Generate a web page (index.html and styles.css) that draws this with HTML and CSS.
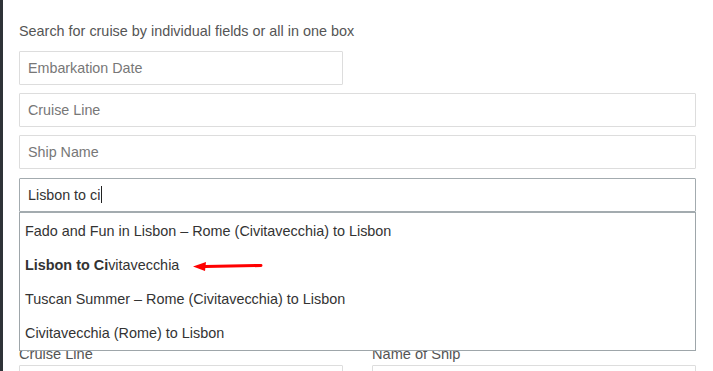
FILE: index.html
```html
<!DOCTYPE html>
<html lang="en">

<head>
    <meta charset="UTF-8">
    <meta name="viewport" content="width=device-width, initial-scale=1.0">
    <title>Cruise Search</title>
    <link rel="stylesheet" href="styles.css">
</head>

<body>
    <div class="panel">
        <p class="intro">Search for cruise by individual fields or all in one box</p>

        <input type="text" class="field half" placeholder="Embarkation Date">
        <input type="text" class="field" placeholder="Cruise Line">
        <input type="text" class="field" placeholder="Ship Name">

        <div class="search-wrap">
            <div class="field focused">Lisbon to ci<span class="caret"></span></div>
            <ul class="suggestions">
                <li>Fado and Fun in Lisbon &ndash; Rome (Civitavecchia) to Lisbon</li>
                <li><b>Lisbon to Ci</b>vitavecchia
                    <svg class="arrow" width="70" height="10" viewBox="0 0 70 10">
                        <path d="M68 4.5 L12 5.5" stroke="#f00" stroke-width="3" stroke-linecap="round" fill="none" />
                        <path d="M0 5.5 L13 1 L12 10 Z" fill="#f00" />
                    </svg>
                </li>
                <li>Tuscan Summer &ndash; Rome (Civitavecchia) to Lisbon</li>
                <li>Civitavecchia (Rome) to Lisbon</li>
            </ul>
        </div>

        <div class="columns">
            <div>
                <label>Cruise Line</label>
                <input type="text" class="field">
            </div>
            <div>
                <label>Name of Ship</label>
                <input type="text" class="field">
            </div>
        </div>
    </div>
</body>

</html>
```

FILE: styles.css
```css
body {
    margin: 0;
    font-family: 'Liberation Sans', Arial, sans-serif;
    background-color: #fff;
    border-left: 3px solid #2f3338;
    height: 100vh;
    box-sizing: border-box;
    overflow: hidden;
}

.panel {
    width: 677px;
    padding: 22px 0 0 16px;
}

.intro {
    margin: 0 0 11px;
    font-size: 14.4px;
    line-height: 18px;
    color: #555;
}

.field {
    display: block;
    width: 100%;
    height: 34px;
    padding: 6px 8px;
    margin: 0 0 8px;
    border: 1px solid #ddd;
    border-radius: 1px;
    box-sizing: border-box;
    font-family: inherit;
    font-size: 14.3px;
    line-height: 20px;
    color: #333;
    background: #fff;
}

.field::placeholder {
    color: #777;
}

.half {
    width: 324px;
}

.search-wrap {
    position: relative;
    margin-top: 9px;
}

.focused {
    border-color: #a3abaf;
    margin: 0;
}

.caret {
    display: inline-block;
    width: 1px;
    height: 17px;
    margin-left: 1px;
    vertical-align: -3px;
    background: #222;
}

.suggestions {
    position: absolute;
    top: 100%;
    left: 0;
    right: 0;
    z-index: 2;
    margin: 0;
    padding: 1px 0 0;
    list-style: none;
    background: #fff;
    border: 1px solid #9ea6aa;
    border-top-color: #a3abaf;
}

.suggestions li {
    height: 34px;
    line-height: 34px;
    padding: 0 5px;
    font-size: 14.4px;
    color: #333;
}

.suggestions b {
    font-weight: bold;
}

.arrow {
    margin-left: 10px;
    vertical-align: middle;
}

.columns {
    display: grid;
    grid-template-columns: 324px 324px;
    column-gap: 29px;
    margin-top: 134px;
}

.columns label {
    display: block;
    font-size: 14.6px;
    line-height: 16px;
    color: #555;
    margin-bottom: 3px;
}
```
